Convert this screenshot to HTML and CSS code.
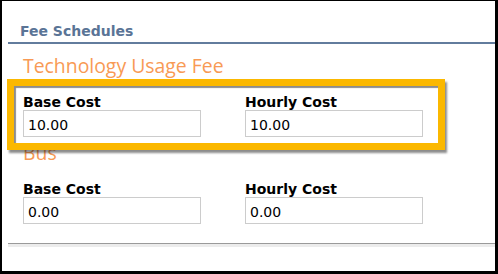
FILE: index.html
```html
<!DOCTYPE html>
<html lang="en">
<head>
    <meta charset="UTF-8">
    <meta name="viewport" content="width=device-width, initial-scale=1.0">
    <title>Fee Schedules</title>
    <link rel="stylesheet" href="styles.css">
</head>
<body>

<div class="panel">
    <h3 class="panel-title">Fee Schedules</h3>

    <div class="fee-group">
        <h4 class="fee-name">Technology Usage Fee</h4>
        <div class="fee-row highlighted">
            <div class="field">
                <label for="tech-base">Base Cost</label>
                <input type="text" id="tech-base" value="10.00">
            </div>
            <div class="field">
                <label for="tech-hourly">Hourly Cost</label>
                <input type="text" id="tech-hourly" value="10.00">
            </div>
            <span class="callout"></span>
        </div>
    </div>

    <div class="fee-group">
        <h4 class="fee-name">Bus</h4>
        <div class="fee-row">
            <div class="field">
                <label for="bus-base">Base Cost</label>
                <input type="text" id="bus-base" value="0.00">
            </div>
            <div class="field">
                <label for="bus-hourly">Hourly Cost</label>
                <input type="text" id="bus-hourly" value="0.00">
            </div>
        </div>
    </div>

    <div class="panel-footer"></div>
</div>

</body>
</html>
```

FILE: styles.css
```css
html {
    background-color: #000;
}

body {
    margin: 1px 3px 3px 2px;
    height: 270px;
    background-color: #fff;
    font-family: "DejaVu Sans", Verdana, sans-serif;
    color: #000;
    overflow: hidden;
}

.panel {
    padding-top: 22px;
}

.panel-title {
    margin: 0 0 0 6px;
    padding: 0 0 2px 12px;
    font-size: 14px;
    line-height: 17px;
    font-weight: bold;
    color: #5a7496;
    border-bottom: 2px solid #627c9d;
}

.fee-group {
    padding-left: 21px;
    margin-top: 10px;
}

.fee-group + .fee-group {
    margin-top: 4px;
}

.fee-name {
    margin: 0;
    font-family: "Open Sans", Lato, sans-serif;
    font-weight: normal;
    font-size: 19.4px;
    line-height: 23px;
    color: #f89a55;
}

.fee-row {
    position: relative;
    display: flex;
    gap: 44px;
    margin-top: 17px;
}

.field {
    display: flex;
    flex-direction: column;
    width: 178px;
}

.field label {
    font-size: 14px;
    line-height: 16px;
    font-weight: bold;
}

.field input {
    box-sizing: border-box;
    width: 100%;
    height: 27px;
    margin: 0;
    padding: 2px 4px 0;
    border: 1px solid #cccccc;
    font-family: "DejaVu Sans", Verdana, sans-serif;
    font-size: 14px;
    color: #000;
    outline: none;
}

/* yellow annotation frame drawn over the first fee */
.callout {
    position: absolute;
    left: -16px;
    top: -15px;
    width: 438px;
    height: 71px;
    box-sizing: border-box;
    border: 7px solid #fbb800;
    box-shadow: 2px 3px 2px rgba(0, 0, 0, 0.45), inset 2px 2px 1px rgba(0, 0, 0, 0.45);
    pointer-events: none;
}

.panel-footer {
    margin: 19px 0 0 6px;
    height: 3px;
    border-top: 1px solid #9a9a9a;
    background-color: #ececec;
}
```
